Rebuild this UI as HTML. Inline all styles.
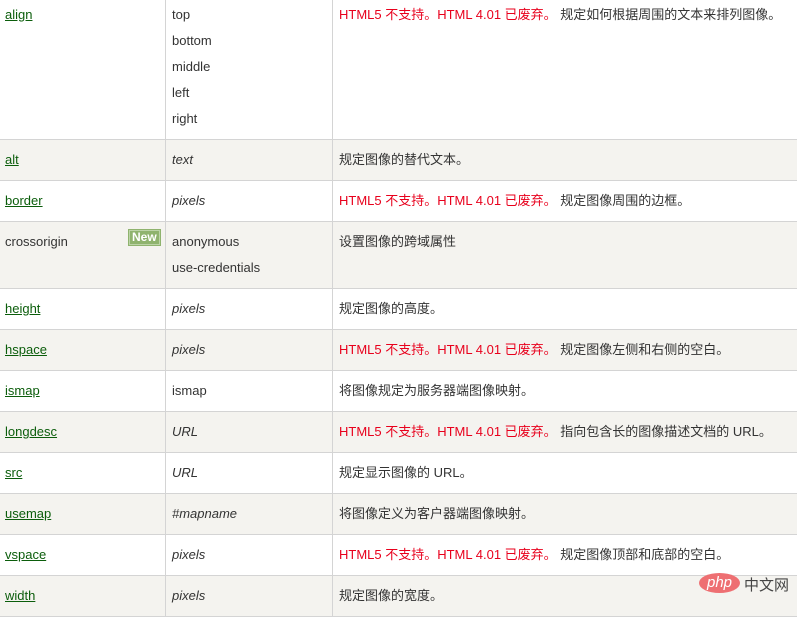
<!DOCTYPE html>
<html><head><meta charset="utf-8"><style>
body{margin:0;width:797px;height:617px;overflow:hidden;background:#fff;font-family:"Liberation Sans","Noto Sans CJK SC",sans-serif;font-size:13px;color:#333}
.r{position:absolute;left:0;width:797px;border-bottom:1px solid #d4d4d4;box-sizing:border-box}
.g{background:#f4f3ef}
.c{position:absolute;top:7px;line-height:26px}
.c1{left:5px}.c2{left:172px}.c3{left:339px}
.v{position:absolute;top:0;width:1px;height:617px;background:#d4d4d4}
a{color:#0b5d0b;text-decoration:underline}
i{font-style:italic}
.red{color:#e8001c}
.new{position:absolute;left:129px;top:8px;background:#8fb36e;color:#fff;font-weight:bold;font-size:12px;line-height:13px;padding:0 2px;border:1px solid #bcd3a7;outline:1px solid #8fb36e}
</style></head><body>
<div class="r" style="top:0;height:140px"><div class="c c1" style="top:2px"><a>align</a></div><div class="c c2" style="top:2px">top<br>bottom<br>middle<br>left<br>right</div><div class="c c3" style="top:2px"><span class="red">HTML5 不支持。HTML 4.01 已废弃。</span> 规定如何根据周围的文本来排列图像。</div></div>
<div class="r g" style="top:140px;height:41px"><div class="c c1"><a>alt</a></div><div class="c c2"><i>text</i></div><div class="c c3">规定图像的替代文本。</div></div>
<div class="r" style="top:181px;height:41px"><div class="c c1"><a>border</a></div><div class="c c2"><i>pixels</i></div><div class="c c3"><span class="red">HTML5 不支持。HTML 4.01 已废弃。</span> 规定图像周围的边框。</div></div>
<div class="r g" style="top:222px;height:67px"><div class="c c1">crossorigin</div><span class="new">New</span><div class="c c2">anonymous<br>use-credentials</div><div class="c c3">设置图像的跨域属性</div></div>
<div class="r" style="top:289px;height:41px"><div class="c c1"><a>height</a></div><div class="c c2"><i>pixels</i></div><div class="c c3">规定图像的高度。</div></div>
<div class="r g" style="top:330px;height:41px"><div class="c c1"><a>hspace</a></div><div class="c c2"><i>pixels</i></div><div class="c c3"><span class="red">HTML5 不支持。HTML 4.01 已废弃。</span> 规定图像左侧和右侧的空白。</div></div>
<div class="r" style="top:371px;height:41px"><div class="c c1"><a>ismap</a></div><div class="c c2">ismap</div><div class="c c3">将图像规定为服务器端图像映射。</div></div>
<div class="r g" style="top:412px;height:41px"><div class="c c1"><a>longdesc</a></div><div class="c c2"><i>URL</i></div><div class="c c3"><span class="red">HTML5 不支持。HTML 4.01 已废弃。</span> 指向包含长的图像描述文档的 URL。</div></div>
<div class="r" style="top:453px;height:41px"><div class="c c1"><a>src</a></div><div class="c c2"><i>URL</i></div><div class="c c3">规定显示图像的 URL。</div></div>
<div class="r g" style="top:494px;height:41px"><div class="c c1"><a>usemap</a></div><div class="c c2"><i>#mapname</i></div><div class="c c3">将图像定义为客户器端图像映射。</div></div>
<div class="r" style="top:535px;height:41px"><div class="c c1"><a>vspace</a></div><div class="c c2"><i>pixels</i></div><div class="c c3"><span class="red">HTML5 不支持。HTML 4.01 已废弃。</span> 规定图像顶部和底部的空白。</div></div>
<div class="r g" style="top:576px;height:41px"><div class="c c1"><a>width</a></div><div class="c c2"><i>pixels</i></div><div class="c c3">规定图像的宽度。</div></div>
<div class="v" style="left:165px"></div><div class="v" style="left:332px"></div>
<div style="position:absolute;left:699px;top:573px;width:41px;height:20px;border-radius:50%;background:#ee6f72;color:#fff;font-style:italic;font-size:15px;line-height:19px;text-align:center">php</div>
<div style="position:absolute;left:744px;top:574px;font-size:15px;color:#444">中文网</div>
</body></html>
